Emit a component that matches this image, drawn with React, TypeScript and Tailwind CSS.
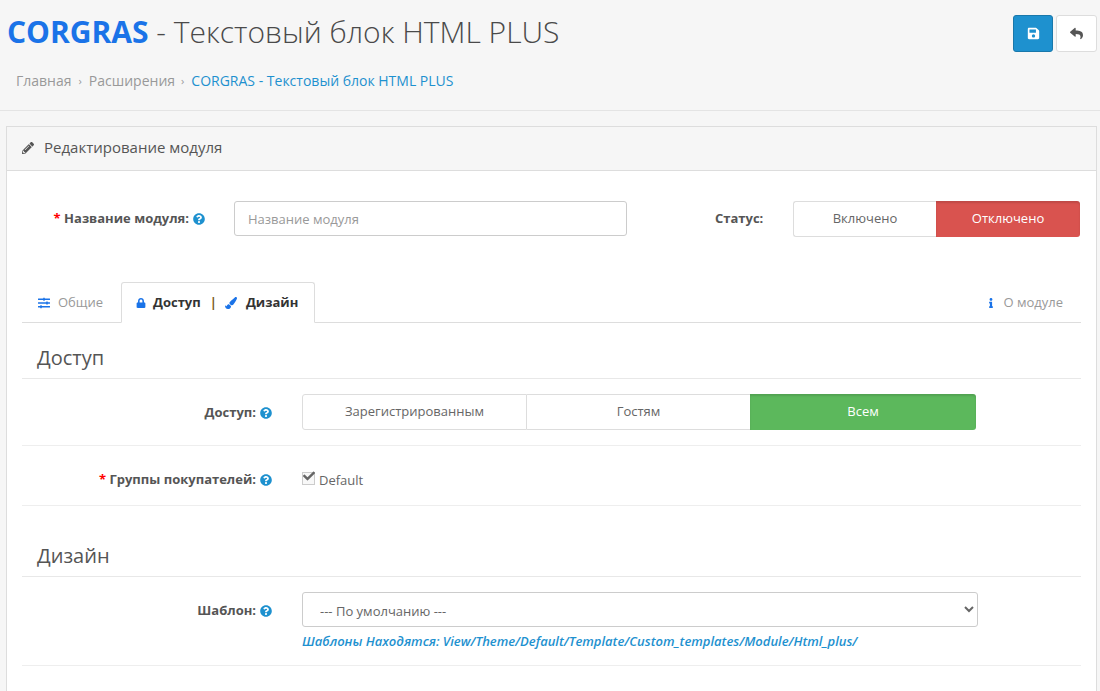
import React from 'react';
import { FaSave, FaReply, FaPencilAlt, FaSlidersH, FaLock, FaPaintBrush, FaInfo, FaQuestionCircle, FaCheck } from 'react-icons/fa';

const Help: React.FC = () => (
    <FaQuestionCircle className="inline-block text-[#1e91cf] text-[12px] ml-[4px] align-[-2px]" />
);

const Star: React.FC = () => <span className="text-[#f00]">* </span>;

const Segment: React.FC<{ label: string; className: string }> = ({ label, className }) => (
    <div className={`flex items-center justify-center text-[13px] ${className}`}>{label}</div>
);

const App: React.FC = () => {
    return (
        <div className="h-[691px] overflow-hidden bg-[#f6f6f6] font-['Open_Sans',sans-serif] text-[13px] text-[#666]">
            <header className="h-[111px] border-b border-[#e4e4e4] pl-[7px] pr-[3px] flex justify-between">
                <div>
                    <h1 className="pt-[12px] text-[30px] leading-[40px] font-light text-[#4a4a4a]">
                        <b className="font-bold text-[#1a73e8]">CORGRAS</b> - Текстовый блок HTML PLUS
                    </h1>
                    <div className="mt-[19px] pl-[9px] flex items-center text-[14px] leading-[20px] text-[#999]">
                        <span>Главная</span>
                        <span className="mx-[7px] text-[11px]">›</span>
                        <span>Расширения</span>
                        <span className="ml-[6px] mr-[7px] text-[11px]">›</span>
                        <span className="text-[#1e91cf]">CORGRAS - Текстовый блок HTML PLUS</span>
                    </div>
                </div>
                <div className="pt-[15px] flex gap-[3px]">
                    <button className="w-[40px] h-[37px] rounded-[3px] bg-[#1e91cf] border border-[#1978ab] text-white flex items-center justify-center">
                        <FaSave className="text-[13px]" />
                    </button>
                    <button className="w-[41px] h-[37px] rounded-[3px] bg-white border border-[#ddd] text-[#555] flex items-center justify-center">
                        <FaReply className="text-[13px]" />
                    </button>
                </div>
            </header>

            <main className="mt-[15px] ml-[6px] mr-[3px] h-[600px] border border-[#ddd] bg-white">
                <div className="h-[44px] bg-[#f6f6f6] border-b border-[#ddd] pl-[15px] pb-[2px] flex items-center text-[15px] text-[#555]">
                    <FaPencilAlt className="text-[12px] mr-[10px] text-[#555]" />
                    Редактирование модуля
                </div>

                <div className="pt-[30px] px-[15px]">
                    <div className="flex items-center h-[36px]">
                        <div className="w-[183px] text-right font-bold text-[13px] text-[#555] shrink-0">
                            <Star />Название модуля:<Help />
                        </div>
                        <input
                            className="ml-[29px] w-[393px] h-[35px] self-start rounded-[3px] border border-[#ccc] px-[13px] text-[13px] outline-none placeholder:text-[#999]"
                            placeholder="Название модуля"
                        />
                        <div className="ml-[88px] w-[48px] font-bold text-[#555] text-[13px]">Статус:</div>
                        <div className="ml-[30px] flex h-[36px]">
                            <Segment label="Включено" className="w-[143px] bg-white border border-[#ddd] border-r-0 rounded-l-[3px] text-[#666]" />
                            <Segment label="Отключено" className="w-[144px] bg-[#d9534f] text-white rounded-r-[3px] shadow-[inset_0_2px_2px_rgba(0,0,0,0.12)]" />
                        </div>
                    </div>

                    <div className="mt-[45px] h-[41px] border-b border-[#ddd] flex justify-between text-[13px]">
                        <div className="flex">
                            <div className="w-[99px] flex items-center pl-[16px] pt-[1px] text-[#999]">
                                <FaSlidersH className="text-[12px] text-[#1a73e8] mr-[8px]" />
                                Общие
                            </div>
                            <div className="w-[194px] h-[41px] bg-white border border-[#ddd] border-b-white rounded-t-[3px] flex items-center pl-[14px] pt-[1px] font-bold text-[#333]">
                                <FaLock className="text-[10px] text-[#1a73e8] mr-[7px]" />
                                Доступ
                                <span className="ml-[9px] mr-[8px] font-bold text-[#7a5c1e]">|</span>
                                <FaPaintBrush className="text-[12px] text-[#1a73e8] mr-[9px]" />
                                Дизайн
                            </div>
                        </div>
                        <div className="flex items-center pr-[18px] pt-[1px] text-[#999]">
                            <FaInfo className="text-[10px] text-[#1a73e8] mr-[7px]" />
                            О модуле
                        </div>
                    </div>

                    <h2 className="mt-[18px] pl-[15px] text-[20px] leading-[34px] text-[#555] border-b border-[#e8e8e8] h-[38px]">Доступ</h2>

                    <div className="h-[67px] border-b border-[#eee] flex items-center">
                        <div className="w-[250px] text-right font-bold text-[13px] text-[#555] shrink-0 mt-[1px]">Доступ:<Help /></div>
                        <div className="ml-[30px] flex h-[36px] -mt-[1px]">
                            <Segment label="Зарегистрированным" className="w-[225px] border border-[#ddd] rounded-l-[3px] text-[#666]" />
                            <Segment label="Гостям" className="w-[223px] border-y border-[#ddd] text-[#666]" />
                            <Segment label="Всем" className="w-[226px] bg-[#5cb85c] text-white rounded-r-[3px] shadow-[inset_0_2px_2px_rgba(0,0,0,0.12)]" />
                        </div>
                    </div>

                    <div className="h-[60px] border-b border-[#eee] flex items-center">
                        <div className="w-[250px] text-right font-bold text-[13px] text-[#555] shrink-0 mt-[8px]"><Star />Группы покупателей:<Help /></div>
                        <label className="ml-[30px] mt-[10px] flex items-center text-[13px] text-[#666]">
                            <span className="relative w-[13px] h-[13px] -mt-[4px] border border-[#ccc] bg-[#f8f8f8] mr-[4px]">
                                <FaCheck className="absolute left-[0px] -top-[3px] text-[12px] text-[#666]" />
                            </span>
                            Default
                        </label>
                    </div>

                    <h2 className="mt-[33px] pl-[15px] text-[20px] leading-[34px] text-[#555] border-b border-[#e8e8e8] h-[38px]">Дизайн</h2>

                    <div className="h-[89px] border-b border-[#eee] flex">
                        <div className="w-[250px] pt-[24px] text-right font-bold text-[13px] text-[#555] shrink-0">Шаблон:<Help /></div>
                        <div className="ml-[30px] pt-[15px]">
                            <select className="w-[676px] h-[35px] rounded-[3px] border border-[#ccc] bg-white pl-[13px] pr-[8px] pt-[2px] text-[13px] text-[#666] outline-none">
                                <option>--- По умолчанию ---</option>
                            </select>
                            <div className="mt-[5px] text-[13px] leading-[18px] italic font-semibold text-[#1e91cf]">
                                Шаблоны Находятся: View/Theme/Default/Template/Custom_templates/Module/Html_plus/
                            </div>
                        </div>
                    </div>
                </div>
            </main>
        </div>
    );
};

export default App;
